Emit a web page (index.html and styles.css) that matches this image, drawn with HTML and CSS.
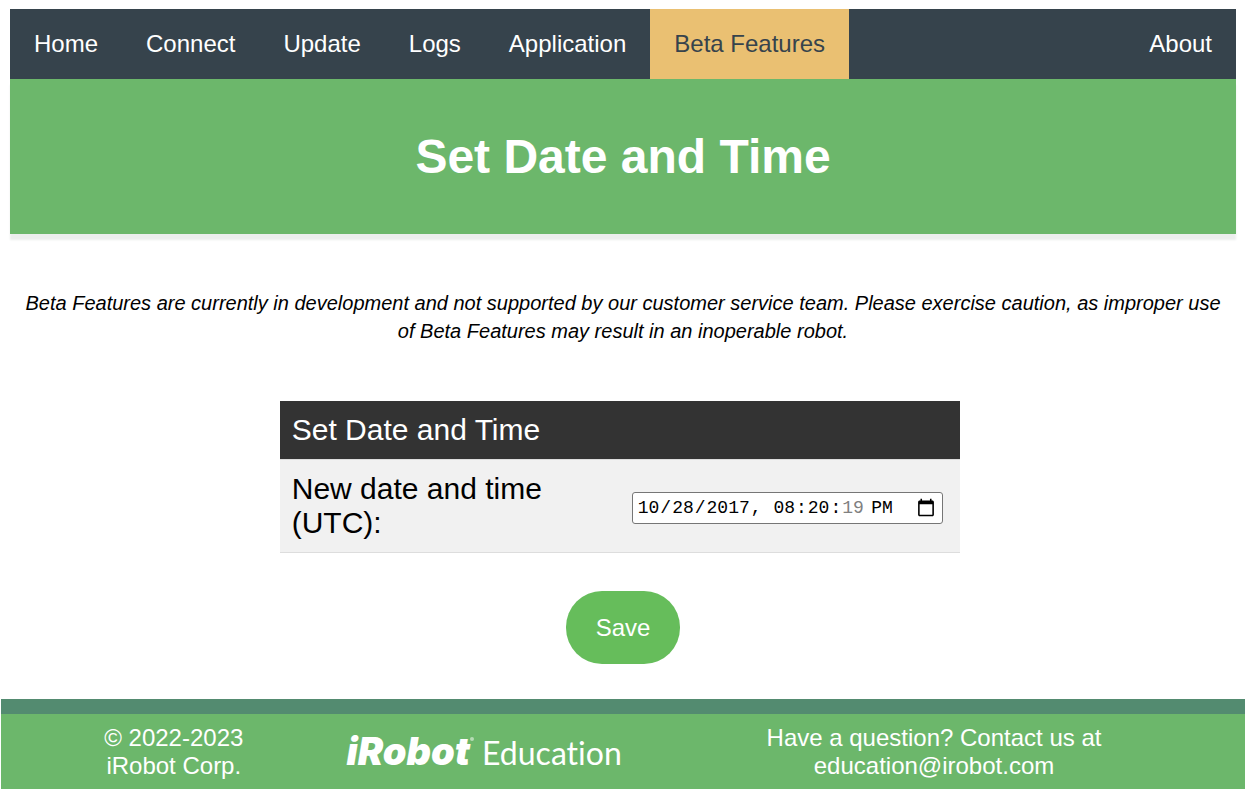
FILE: index.html
```html
<!DOCTYPE html>
<html lang="en-US">

<head>
    <meta charset="utf-8">
    <title>Set Date and Time</title>
    <meta name="viewport" content="width=device-width, initial-scale=1.0">
    <link rel="stylesheet" href="styles.css">
</head>

<body>
    <div class="page">
        <nav class="navbar">
            <a href="#">Home</a>
            <a href="#">Connect</a>
            <a href="#">Update</a>
            <a href="#">Logs</a>
            <a href="#">Application</a>
            <a href="#" class="active">Beta Features</a>
            <a href="#" class="right">About</a>
        </nav>
        <header class="banner">
            <h1>Set Date and Time</h1>
        </header>

        <main>
            <p class="notice">Beta Features are currently in development and not supported by our customer service team. Please exercise caution, as improper use of Beta Features may result in an inoperable robot.</p>

            <form>
                <table class="settings">
                    <tr>
                        <th colspan="2">Set Date and Time</th>
                    </tr>
                    <tr>
                        <td><label for="datetime">New date and time (UTC):</label></td>
                        <td><input type="datetime-local" id="datetime" name="datetime" value="2017-10-28T20:20:19"></td>
                    </tr>
                </table>
                <button type="button" class="save">Save</button>
            </form>
        </main>
    </div>

    <footer class="footer">
        <p>© 2022-2023<br>iRobot Corp.</p>
        <div class="logo">
            <span class="logo-name">iRobot</span>
            <span class="logo-mark"></span>
            <span class="logo-sub">Education</span>
        </div>
        <p>Have a question? Contact us at<br><a href="mailto:education@irobot.com">education@irobot.com</a></p>
    </footer>
</body>

</html>
```
FILE: styles.css
```css
* {
    box-sizing: border-box;
}

body {
    margin: 0;
    font-family: Arial, "Liberation Sans", sans-serif;
    font-size: 24px;
    line-height: 28px;
    color: #000;
    background: #fff;
}

.page {
    padding: 9px 9px 35px 10px;
}

/* navigation */
.navbar {
    display: flex;
    background: #36434c;
}

.navbar a {
    padding: 21px 24px;
    color: #fff;
    text-decoration: none;
}

.navbar a.active {
    background: #eac072;
    color: #36434c;
}

.navbar .right {
    margin-left: auto;
}

.banner {
    padding: 50px 20px;
    background: #6cb76b;
    color: #fff;
    text-align: center;
    box-shadow: 0 6px 2px #eceeed;
}

.banner h1 {
    margin: 0;
    font-size: 48px;
    line-height: 55px;
}

.notice {
    margin: 55px 0 56px;
    padding: 0 12px;
    font-size: 20px;
    font-style: italic;
    text-align: center;
}

/* date form */
.settings {
    width: 680px;
    max-width: 78%;
    margin-left: 22%;
    border-collapse: separate;
    border-spacing: 0;
    table-layout: fixed;
    font-size: 30px;
    line-height: 34px;
}

.settings th,
.settings td {
    padding: 12px;
    text-align: left;
    font-weight: normal;
}

.settings th {
    background: #333;
    color: #fff;
}

.settings td {
    background: #f1f1f1;
    border-top: 1px solid #ddd;
    border-bottom: 1px solid #ddd;
}

.settings input {
    width: 311px;
    max-width: 100%;
    height: 32px;
    padding: 0 4px;
    border: 1px solid #767676;
    border-radius: 3px;
    background: #fff;
    font-family: "Liberation Mono", monospace;
    font-size: 18px;
    vertical-align: middle;
}

.settings input::-webkit-calendar-picker-indicator {
    width: 20px;
    height: 20px;
}

.save {
    display: block;
    margin: 38px auto 0;
    padding: 23px 30px 22px;
    border: none;
    border-radius: 36px;
    background: #66bd5b;
    color: #fff;
    font: inherit;
    cursor: pointer;
}

/* footer */
.footer {
    display: grid;
    grid-template-columns: 5fr 4fr 9fr;
    align-items: center;
    margin-left: 1px;
    padding: 10px 0 9px;
    border-top: 15px solid #538b70;
    background: #6cb76b;
    color: #fff;
    text-align: center;
}

.footer p {
    margin: 0;
}

.footer a {
    color: inherit;
    text-decoration: none;
}

.logo {
    display: flex;
    align-items: baseline;
    font-family: Lato, sans-serif;
}

.logo-name {
    font-family: Inter, sans-serif;
    font-size: 38px;
    font-weight: 900;
    font-style: italic;
}

.logo-mark {
    width: 4px;
    height: 4px;
    margin-right: 8px;
    align-self: flex-start;
    border-radius: 50%;
    background: #b6dbb5;
}

.logo-sub {
    font-size: 32px;
    font-variant-ligatures: none;
}
```
